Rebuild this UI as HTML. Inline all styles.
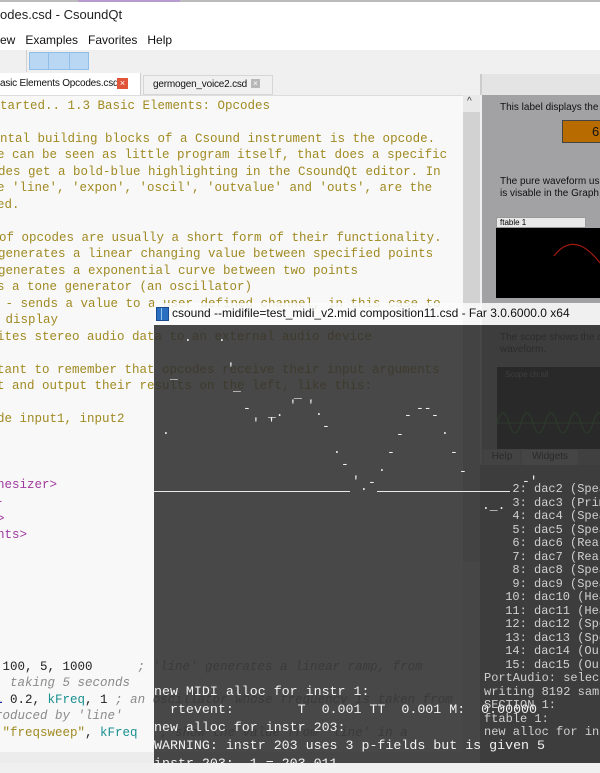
<!DOCTYPE html>
<html><head><meta charset="utf-8"><style>
*{margin:0;padding:0;box-sizing:border-box}
body{width:600px;height:763px;overflow:hidden;background:#f0f0f0;position:relative;font-family:"Liberation Sans",sans-serif}
.a{position:absolute;white-space:pre}
.ed{font-family:"Liberation Mono",monospace;font-size:12.5px;line-height:16px;color:#a08a22}
.p{color:#a03aa0}.k{color:#222}.c{color:#8a8a8a;font-style:italic}.t{color:#1a9090}.b{color:#1a2aa0;font-weight:bold}
.con{font-family:"Liberation Mono",monospace;font-size:13.3px;line-height:18px;color:#f2f2f2}
.dac{font-family:"Liberation Mono",monospace;font-size:12px;line-height:13.5px;color:#d0d0d0}
.art{font-family:"Liberation Mono",monospace;font-size:13px;color:#f0f0f0;line-height:14px}
</style></head><body>
<!-- title -->
<div class="a" style="left:0;top:0;width:600px;height:28px;background:#fff;border-top:2px solid #bbb"></div>
<div class="a" style="left:78px;top:0;width:102px;height:2px;background:#b79ad0"></div>
<div class="a" style="left:0;top:7px;font-size:13px;color:#222">odes.csd - CsoundQt</div>
<div class="a" style="left:0;top:28px;width:600px;height:22px;background:#fff"></div>
<div class="a" style="left:0;top:33px;font-size:12px;color:#111">ew&nbsp;&nbsp;&nbsp;Examples&nbsp;&nbsp;&nbsp;Favorites&nbsp;&nbsp;&nbsp;Help</div>
<div class="a" style="left:0;top:50px;width:600px;height:24px;background:#f0f0f0"></div>
<div class="a" style="left:26px;top:50px;width:1px;height:22px;background:#d0d0d0"></div>
<div class="a" style="left:29px;top:52px;width:60px;height:18px;background:#b9d7f3;border:1px solid #8fbfe8"></div>
<div class="a" style="left:48px;top:52px;width:1px;height:18px;background:#8fbfe8"></div>
<div class="a" style="left:69px;top:52px;width:1px;height:18px;background:#8fbfe8"></div>
<!-- tabs -->
<div class="a" style="left:0;top:73px;width:141px;height:23px;background:#fff;border-right:1px solid #ccc"></div>
<div class="a" style="left:0;top:78px;font-size:10px;letter-spacing:-0.2px;color:#111">asic Elements Opcodes.csd</div>
<div class="a" style="left:117px;top:78px;width:11px;height:11px;background:#e0553a;color:#fff;font-size:9px;line-height:11px;text-align:center">×</div>
<div class="a" style="left:143px;top:75px;width:130px;height:20px;background:#f0f0f0;border:1px solid #d6d6d6"></div>
<div class="a" style="left:153px;top:79px;font-size:10px;letter-spacing:-0.2px;color:#111">germogen_voice2.csd</div>
<div class="a" style="left:251px;top:79px;width:9px;height:9px;background:#b8b8b8;color:#fff;font-size:8px;line-height:9px;text-align:center">×</div>
<!-- editor -->
<div class="a" style="left:0;top:95px;width:463px;height:668px;background:#f8f8f8;border-top:1px solid #ddd"></div>
<div class="a" style="left:0;top:752px;width:463px;height:11px;background:#ececec"></div>
<div class="a" style="left:463px;top:95px;width:17px;height:668px;background:#e9e9e9"></div>
<div class="a" style="left:463px;top:112px;width:17px;height:450px;background:#d2d2d2"></div>
<div class="a" style="left:467px;top:96px;font-size:10px;color:#333">^</div>
<div class="a ed" style="left:0;top:98px">tarted.. 1.3 Basic Elements: Opcodes</div>
<div class="a ed" style="left:0;top:131px">ntal building blocks of a Csound instrument is the opcode.</div>
<div class="a ed" style="left:-3px;top:147px">e can be seen as little program itself, that does a specific</div>
<div class="a ed" style="left:-2px;top:164px">des get a bold-blue highlighting in the CsoundQt editor. In</div>
<div class="a ed" style="left:-3px;top:180px">e 'line', 'expon', 'oscil', 'outvalue' and 'outs', are the</div>
<div class="a ed" style="left:-3px;top:197px">ed.</div>
<div class="a ed" style="left:-1px;top:230px">of opcodes are usually a short form of their functionality.</div>
<div class="a ed" style="left:-2px;top:246px">generates a linear changing value between specified points</div>
<div class="a ed" style="left:-2px;top:263px">generates a exponential curve between two points</div>
<div class="a ed" style="left:-3px;top:279px">s a tone generator (an oscillator)</div>
<div class="a ed" style="left:-2px;top:296px"> - sends a value to a user defined channel, in this case to</div>
<div class="a ed" style="left:-2px;top:312px"> display</div>
<div class="a ed" style="left:-3px;top:329px">ites stereo audio data to an external audio device</div>
<div class="a ed" style="left:-3px;top:362px">tant to remember that opcodes receive their input arguments</div>
<div class="a ed" style="left:-3px;top:378px">t and output their results on the left, like this:</div>
<div class="a ed" style="left:-3px;top:411px">de input1, input2</div>
<div class="a ed p" style="left:-3px;top:477px">hesizer&gt;</div>
<div class="a ed p" style="left:-4px;top:494px">-</div>
<div class="a ed p" style="left:-3px;top:511px">&gt;</div>
<div class="a ed p" style="left:-3px;top:527px">nts&gt;</div>
<div class="a ed b" style="left:-5px;top:576px">:</div>
<div class="a ed" style="left:-5px;top:659px"><span class="k"> 100, 5, 1000     </span><span class="c"> ; 'line' generates a linear ramp, from</span></div>
<div class="a ed c" style="left:-5px;top:675px">, taking 5 seconds</div>
<div class="a ed" style="left:-5px;top:692px"><span class="b">i</span><span class="k"> 0.2, </span><span class="t">kFreq</span><span class="k">, 1</span><span class="c"> ; an oscillator whose frequency is taken from</span></div>
<div class="a ed c" style="left:-5px;top:708px">roduced by 'line'</div>
<div class="a ed" style="left:-5px;top:725px"><span class="k"> </span>"freqsweep"<span class="k">, </span><span class="t">kFreq</span><span class="c">   ; show the value from 'line' in a</span></div>
<!-- right panel -->
<div class="a" style="left:480px;top:74px;width:120px;height:21px;background:#e4e4e4;border-left:2px solid #ccc"></div>
<div class="a" style="left:482px;top:95px;width:118px;height:370px;background:#a2a2a4"></div>
<div class="a" style="left:500px;top:102px;font-size:10px;color:#111">This label displays the c</div>
<div class="a" style="left:562px;top:120px;width:40px;height:23px;background:#b86c00;border:1px solid #444"></div>
<div class="a" style="left:592px;top:124px;font-size:13px;color:#111">6</div>
<div class="a" style="left:500px;top:176px;font-size:10px;line-height:12px;color:#111">The pure waveform use
is visable in the Graph c</div>
<div class="a" style="left:496px;top:217px;width:90px;height:11px;background:#e8e8e8;border:1px solid #999;font-size:8px;line-height:9px;padding-left:3px">ftable 1</div>
<div class="a" style="left:496px;top:228px;width:104px;height:70px;background:#000"></div>
<svg class="a" style="left:496px;top:217px" width="104" height="81"><path d="M58 39 Q70 23 85 29 Q95 34 104 46" stroke="#a01a10" stroke-width="1.2" fill="none"/></svg>
<div class="a" style="left:500px;top:332px;font-size:10px;line-height:12px;color:#111">The scope shows the c
waveform.</div>
<div class="a" style="left:497px;top:367px;width:103px;height:82px;background:#000"></div>
<div class="a" style="left:505px;top:370px;font-size:8px;color:#aaa">Scope ch:all</div>
<svg class="a" style="left:497px;top:367px" width="103" height="82"><line x1="0" y1="56" x2="103" y2="56" stroke="#1a6a1a"/><path d="M0 56 Q6 36 12 56 T24 56 T36 56 T48 56 T60 56 T72 56 T84 56 T96 56 T108 56" stroke="#1a8a1a" stroke-width="1.3" fill="none"/></svg>
<div class="a" style="left:482px;top:449px;width:118px;height:16px;background:#bcbcbc"></div>
<div class="a" style="left:484px;top:450px;width:36px;height:15px;background:#d0d0d0;font-size:10px;text-align:center;line-height:14px">Help</div>
<div class="a" style="left:522px;top:450px;width:56px;height:15px;background:#e0e0e0;font-size:10px;text-align:center;line-height:14px">Widgets</div>
<div class="a" style="left:480px;top:465px;width:120px;height:298px;background:#d8d8d8"></div>
<!-- overlay -->
<div class="a" style="left:154px;top:303px;width:446px;height:22px;background:rgba(250,250,250,0.88)"></div>
<div class="a" style="left:156px;top:307px;width:13px;height:14px;background:#2a6fc0;border:1px solid #1a4a90"></div>
<div class="a" style="left:161px;top:308px;width:1px;height:12px;background:#9cc4f0"></div>
<div class="a" style="left:172px;top:306px;font-size:12px;color:#111">csound --midifile=test_midi_v2.mid composition11.csd - Far 3.0.6000.0 x64</div>
<div class="a" style="left:154px;top:325px;width:446px;height:438px;background:rgba(47,47,47,0.88)"></div>
<div class="a" style="left:480px;top:465px;width:120px;height:298px;background:#3d3d3d"></div>
<!-- ascii art -->
<div class="a" style="left:154px;top:491px;width:196px;height:1px;background:#e8e8e8"></div>
<div class="a" style="left:377px;top:491px;width:133px;height:1px;background:#e8e8e8"></div>
<div class="a art" style="left:184px;top:331px">.</div><div class="a art" style="left:218px;top:331px">.</div>
<div class="a art" style="left:227px;top:362px">'</div>
<div class="a art" style="left:170px;top:368px">_</div><div class="a art" style="left:233px;top:380px">_</div>
<div class="a art" style="left:162px;top:424px">.</div><div class="a art" style="left:243px;top:402px">-</div>
<div class="a art" style="left:252px;top:417px">' '</div><div class="a art" style="left:268px;top:406px">_.</div>
<div class="a art" style="left:289px;top:399px">'</div><div class="a art" style="left:294px;top:387px">_</div>
<div class="a art" style="left:307px;top:399px">'</div><div class="a art" style="left:315px;top:405px">.</div>
<div class="a art" style="left:322px;top:420px">-</div><div class="a art" style="left:333px;top:443px">.</div>
<div class="a art" style="left:341px;top:458px">-</div><div class="a art" style="left:352px;top:475px">'</div>
<div class="a art" style="left:360px;top:480px">.</div><div class="a art" style="left:368px;top:476px">-</div>
<div class="a art" style="left:378px;top:461px">.</div><div class="a art" style="left:387px;top:446px">-</div>
<div class="a art" style="left:396px;top:428px">-</div><div class="a art" style="left:404px;top:409px">-</div>
<div class="a art" style="left:416px;top:402px">--</div><div class="a art" style="left:431px;top:409px">-</div>
<div class="a art" style="left:441px;top:424px">.</div><div class="a art" style="left:450px;top:446px">-</div>
<div class="a art" style="left:459px;top:465px">-</div><div class="a art" style="left:522px;top:475px">-'</div>
<div class="a art" style="left:482px;top:499px">._.</div>
<!-- dac list -->
<div class="a dac" style="left:498px;top:483px">  2: dac2 (Spea
  3: dac3 (Prim
  4: dac4 (Spea
  5: dac5 (Spea
  6: dac6 (Real
  7: dac7 (Real
  8: dac8 (Spea
  9: dac9 (Spea
 10: dac10 (Hea
 11: dac11 (Hea
 12: dac12 (Spe
 13: dac13 (Spe
 14: dac14 (Out
 15: dac15 (Out</div>
<div class="a dac" style="left:484px;top:672px">PortAudio: selec
writing 8192 sam
SECTION 1:
ftable 1:
new alloc for in</div>
<!-- console -->
<div class="a con" style="left:154px;top:683px">new MIDI alloc for instr 1:
  rtevent:        T  0.001 TT  0.001 M:  0.00000
new alloc for instr 203:
WARNING: instr 203 uses 3 p-fields but is given 5
instr 203:  1 = 203.011</div>
</body></html>
